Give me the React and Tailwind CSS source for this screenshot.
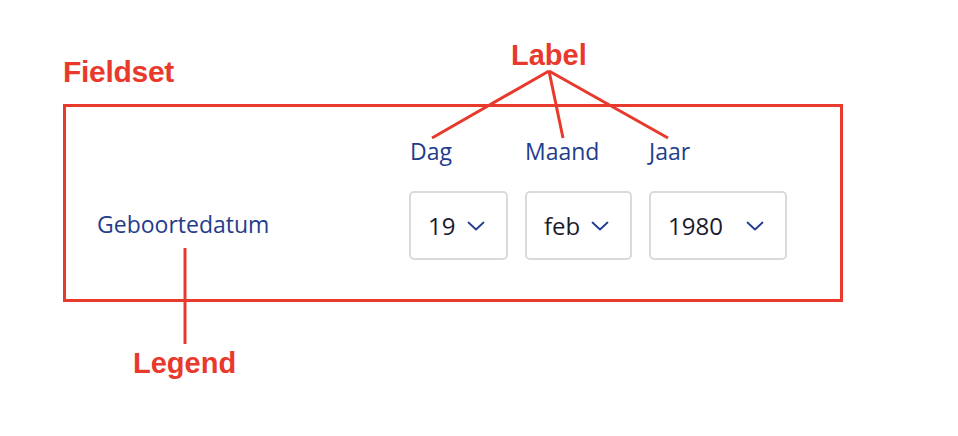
import React from 'react';

const RED = '#e9392d';

const Chevron = () => (
  <svg width="18" height="10" viewBox="0 0 18 10" fill="none" className="shrink-0">
    <path d="M1.5 1.5 L9 8.5 L16.5 1.5" stroke="#1f3d8c" strokeWidth="1.8" strokeLinecap="round" strokeLinejoin="round" />
  </svg>
);

const SelectBox = ({ value, width }) => (
  <div
    className={`h-[69px] ${width} flex items-center justify-between pl-[17px] pr-[21px] rounded-[5px] border-2 border-[#dadade] bg-white text-[24px] text-[#1b1b2c]`}
  >
    <span>{value}</span>
    <Chevron />
  </div>
);

// Annotation lines drawn over the diagram
const Annotations = () => (
  <svg className="absolute inset-0 pointer-events-none" width="958" height="436" viewBox="0 0 958 436">
    <g stroke={RED} strokeWidth="3" strokeLinecap="butt">
      <line x1="549" y1="71" x2="432" y2="138" />
      <line x1="549" y1="71" x2="563" y2="138" />
      <line x1="549" y1="71" x2="668" y2="138" />
      <line x1="185" y1="248" x2="185" y2="344" />
    </g>
  </svg>
);

export default function App() {
  return (
    <div
      className="relative w-[958px] h-[436px] bg-white overflow-hidden"
      style={{ fontFamily: '"Open Sans", "Noto Sans", sans-serif' }}
    >
      <div className="pl-[63px] pt-[57px]">
        <div
          className="text-[30px] leading-[30px] font-bold tracking-[-0.3px]"
          style={{ color: RED, fontFamily: '"Liberation Sans", Arial, sans-serif' }}
        >
          Fieldset
        </div>

        {/* Fieldset */}
        <div className="mt-[17px] w-[780px] h-[198px] border-[3px] border-[#e9392d] grid grid-cols-[343px_auto] content-start pt-[29px]">
          <div />
          <div className="flex gap-[17px] text-[23px] leading-[30px] text-[#1f3d8c]">
            <span className="w-[99px] pl-[1px]">Dag</span>
            <span className="w-[107px]">Maand</span>
            <span className="w-[138px]">Jaar</span>
          </div>
          <div className="flex items-center pl-[31px] mt-[25px] pb-[2px] text-[23px] text-[#1f3d8c]">
            Geboortedatum
          </div>
          <div className="flex gap-[17px] mt-[25px]">
            <SelectBox value="19" width="w-[99px]" />
            <SelectBox value="feb" width="w-[107px]" />
            <SelectBox value="1980" width="w-[138px]" />
          </div>
        </div>

        <div
          className="mt-[46px] ml-[70px] text-[29px] leading-[30px] font-bold"
          style={{ color: RED, fontFamily: '"Liberation Sans", Arial, sans-serif' }}
        >
          Legend
        </div>
      </div>

      <div
        className="absolute left-[511px] top-[40px] text-[29px] leading-[30px] font-bold"
        style={{ color: RED, fontFamily: '"Liberation Sans", Arial, sans-serif' }}
      >
        Label
      </div>

      <Annotations />
    </div>
  );
}
